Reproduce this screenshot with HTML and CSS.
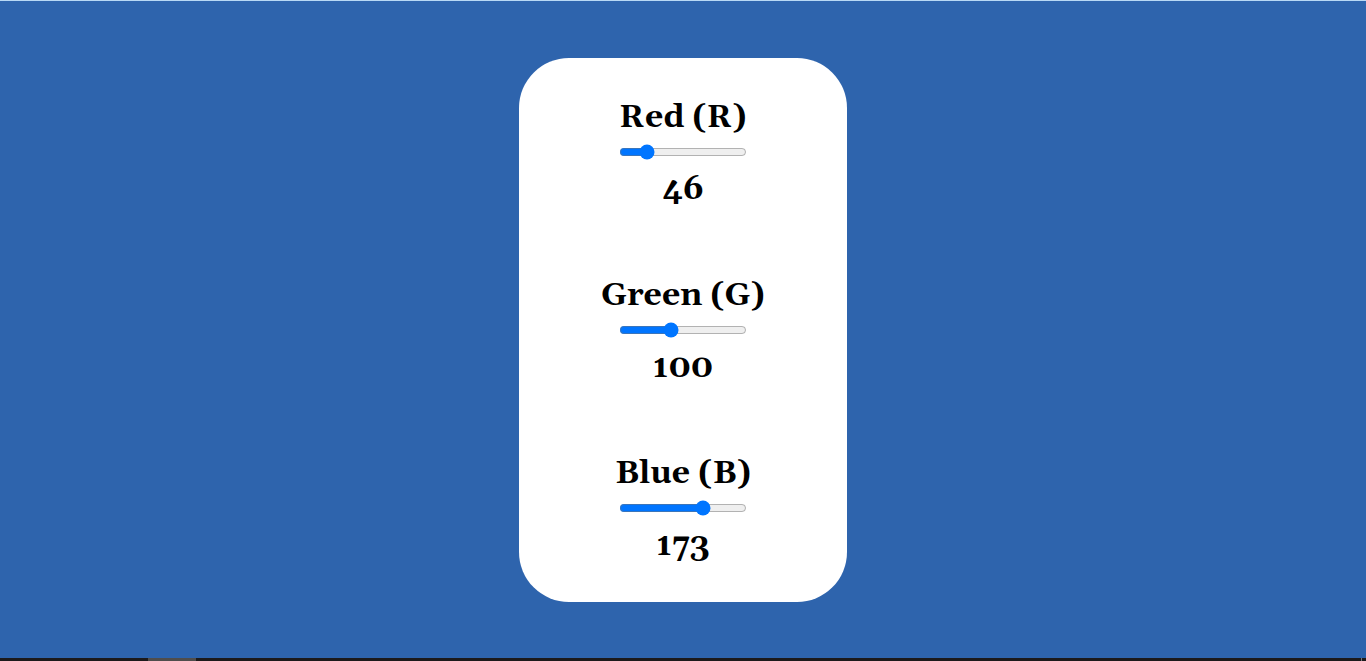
FILE: index.html
```html
<!DOCTYPE html>
<html lang="en">
<head>
<meta charset="utf-8">
<meta name="viewport" content="width=device-width, initial-scale=1">
<title>RGB Color Mixer</title>
<link rel="stylesheet" href="styles.css">
</head>
<body>
<main class="stage">
  <form class="mixer">
    <div class="channel">
      <label class="channel-name" for="red">Red (R)</label>
      <input class="slider" type="range" id="red" min="0" max="255" value="46">
      <output class="channel-value" for="red">46</output>
    </div>
    <div class="channel">
      <label class="channel-name" for="green">Green (G)</label>
      <input class="slider" type="range" id="green" min="0" max="255" value="100">
      <output class="channel-value" for="green">100</output>
    </div>
    <div class="channel">
      <label class="channel-name" for="blue">Blue (B)</label>
      <input class="slider" type="range" id="blue" min="0" max="255" value="173">
      <output class="channel-value" for="blue">173</output>
    </div>
  </form>
</main>
<footer class="taskbar">
  <span class="taskbar-item"></span>
  <span class="taskbar-divider"></span>
</footer>
</body>
</html>
```

FILE: styles.css
```css
* {
  box-sizing: border-box;
}

body {
  display: flex;
  flex-direction: column;
  min-height: 100vh;
  margin: 0;
  border-top: 1px solid #b9d9f5;
  background: rgb(46, 100, 173);
  color: #000;
  font-family: Georgia, Gelasio, "DejaVu Serif", "Liberation Serif", serif;
}

.stage {
  flex: 1;
  display: flex;
  align-items: center;
  justify-content: center;
}

.mixer {
  display: flex;
  flex-direction: column;
  gap: 70px;
  width: 24%;
  min-width: 240px;
  padding: 42px 0 38px;
  border-radius: 50px;
  background: #fff;
}

.channel {
  display: flex;
  flex-direction: column;
  align-items: center;
}

.channel-name,
.channel-value {
  font-size: 32px;
  font-weight: bold;
  line-height: 36px;
}

.slider {
  width: 128px;
  height: 16px;
  margin: 8px 0 12px;
}

.taskbar {
  display: flex;
  justify-content: space-between;
  height: 3px;
  padding: 0 4px 0 148px;
  background: #1c1a1b;
}

.taskbar-item {
  width: 48px;
  background: #4f4d4c;
}

.taskbar-divider {
  width: 1px;
  background: #77797c;
}
```
